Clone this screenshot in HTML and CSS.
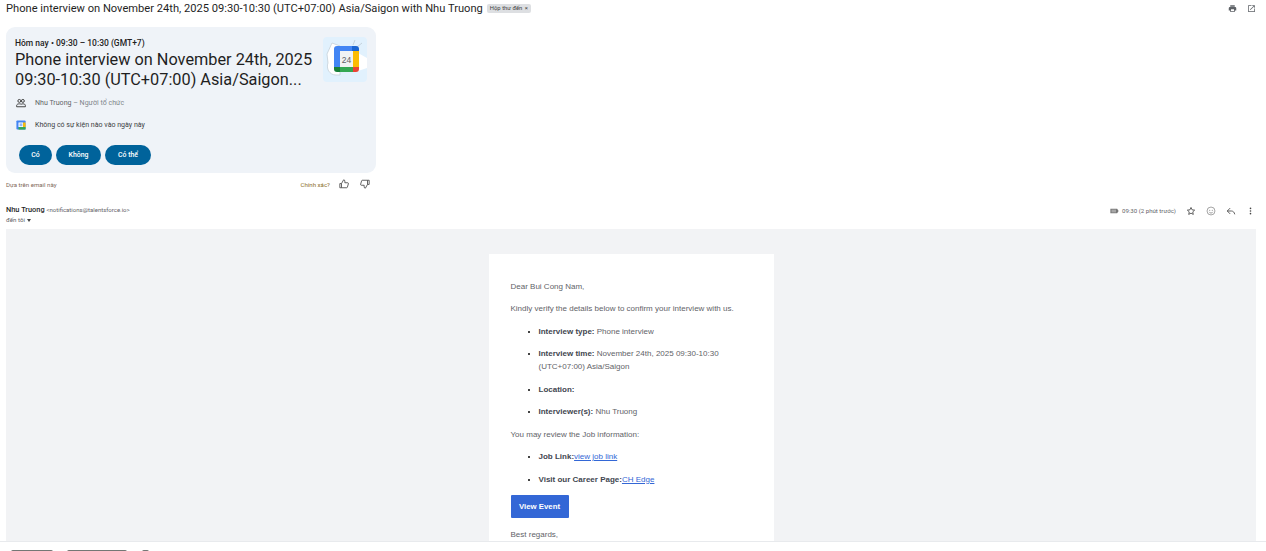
FILE: index.html
```html
<!DOCTYPE html>
<html lang="vi">
<head>
<meta charset="utf-8">
<title>Phone interview</title>
<link rel="stylesheet" href="styles.css">
</head>
<body>
<div class="page">
  <main class="main">
    <header class="subject-row">
      <h1 class="subject">Phone interview on November 24th, 2025 09:30-10:30 (UTC+07:00) Asia/Saigon with Nhu Truong</h1>
      <span class="label">Hộp thư đến <span class="label-x">×</span></span>
      <span class="subject-icons">
        <svg class="ico" viewBox="0 0 24 24"><path d="M19 8H5a3 3 0 0 0-3 3v6h4v4h12v-4h4v-6a3 3 0 0 0-3-3zm-3 11H8v-5h8v5zM18 3H6v4h12V3z"/></svg>
        <svg class="ico" viewBox="0 0 24 24"><path d="M19 19H5V5h7V3H3v18h18v-9h-2v7zM14 3v2h3.6l-9.8 9.8 1.4 1.4L19 6.4V10h2V3h-7z"/></svg>
      </span>
    </header>

    <section class="card">
      <div class="card-top">
        <div class="card-head">
          <div class="when">Hôm nay • 09:30 – 10:30 (GMT+7)</div>
          <div class="title">Phone interview on November 24th, 2025 09:30-10:30 (UTC+07:00) Asia/Saigon...</div>
        </div>
        <div class="art">
          <svg viewBox="0 0 44 45" width="44" height="45">
            <rect width="44" height="45" rx="4" fill="#e1f1fd"/>
            <path d="M4 17L9 6l8 3v29h-4C6 38 3 31 5 26z" fill="#fff" stroke="#bfcad3" stroke-width=".7"/>
            <path d="M35 16l9 5v10l-9 3z" fill="#fff"/>
            <path d="M32 3l-2 5M39 6l-5 4" stroke="#b9c6d0" stroke-width=".7"/>
            <path d="M14 9h15v5H11v-2a3 3 0 0 1 3-3z" fill="#4285f4"/>
            <path d="M29 9h4a3 3 0 0 1 3 3v2h-7z" fill="#1a66d2"/>
            <rect x="11" y="13" width="6" height="17" fill="#4285f4"/>
            <rect x="30" y="14" width="6" height="16" fill="#fbbc04"/>
            <path d="M11 30h6v5h-3a3 3 0 0 1-3-3z" fill="#188038"/>
            <rect x="17" y="30" width="13" height="5" fill="#34a853"/>
            <path d="M30 30h6v2a3 3 0 0 1-3 3h-3z" fill="#ea4335"/>
            <rect x="17" y="14" width="13" height="16" fill="#f1f3f4"/>
            <text x="23.5" y="25.500" class="art-num">24</text>
          </svg>
        </div>
      </div>
      <div class="info-row">
        <svg class="info-ico" viewBox="0 0 24 24"><g fill="none" stroke="#444" stroke-width="2.400"><circle cx="8" cy="7" r="3.500"/><circle cx="16.500" cy="7" r="3.500"/><path d="M1.500 21v-3c0-2.500 3-4 6.500-4 1.800 0 3.200.4 4.300 1 1-.6 2.500-1 4.200-1 3.500 0 6 1.500 6 4v3z"/></g></svg>
        <span class="info-text">Nhu Truong <span class="muted">– Người tổ chức</span></span>
      </div>
      <div class="info-row row-two">
        <svg class="info-ico" viewBox="0 0 24 24">
          <rect x="1" y="1" width="22" height="22" rx="2" fill="#4285f4"/>
          <rect x="6" y="6" width="11" height="11" fill="#fff"/>
          <rect x="17" y="6" width="6" height="11" fill="#fbbc04"/>
          <rect x="6" y="17" width="17" height="6" fill="#34a853"/>
          <rect x="9" y="8" width="2" height="7" fill="#4285f4"/>
          <rect x="13" y="8" width="2" height="7" fill="#4285f4"/>
        </svg>
        <span class="info-text dark">Không có sự kiện nào vào ngày này</span>
      </div>
      <div class="rsvp">
        <button class="pill pill-yes">Có</button>
        <button class="pill pill-no">Không</button>
        <button class="pill pill-maybe">Có thể</button>
      </div>
    </section>

    <div class="feedback">
      <span class="based">Dựa trên email này</span>
      <span class="feedback-right">
        <span class="accurate">Chính xác?</span>
        <svg class="thumb" viewBox="0 0 24 24"><path fill="none" stroke="#444" stroke-width="2" d="M2 11h4v10H2zM6 11l5-9c2 0 3 1 3 3v4h7c1 0 2 1 1.500 2.500L20 20c-.3.700-1 1-1.500 1H6"/></svg>
        <svg class="thumb thumb-down" viewBox="0 0 24 24"><path fill="none" stroke="#444" stroke-width="2" d="M18 13h4V3h-4zM18 13l-5 9c-2 0-3-1-3-3v-4H3c-1 0-2-1-1.500-2.500L4 4c.3-.7 1-1 1.500-1H18"/></svg>
      </span>
    </div>

    <div class="sender-row">
      <div class="sender">
        <div><span class="sender-name">Nhu Truong</span> <span class="sender-mail">&lt;notifications@talentsforce.io&gt;</span></div>
        <div class="to-me">đến tôi <span class="caret"></span></div>
      </div>
      <div class="sender-tools">
        <svg class="tag" viewBox="0 0 24 14"><path fill="#777" d="M1 1h18l4 6-4 6H1z"/><path stroke="#fff" stroke-width="1" d="M4 4.500h12M4 7h12M4 9.500h12"/></svg>
        <span class="time">09:30 (2 phút trước)</span>
        <svg class="tool tool-star" viewBox="0 0 24 24"><path fill="none" stroke="#444" stroke-width="2" d="M12 3.500l2.600 5.700 6.200.7-4.600 4.200 1.300 6.100L12 17.200l-5.500 3 1.300-6.100-4.600-4.200 6.200-.7z"/></svg>
        <svg class="tool tool-smile" viewBox="0 0 24 24"><g fill="none" stroke="#777" stroke-width="1.600"><circle cx="12" cy="12" r="9.500"/><path d="M7.500 14c1 2 2.700 3 4.500 3s3.500-1 4.500-3"/></g><circle cx="9" cy="10" r="1.200" fill="#777"/><circle cx="15" cy="10" r="1.200" fill="#777"/></svg>
        <svg class="tool tool-reply" viewBox="0 0 24 24"><path fill="none" stroke="#444" stroke-width="2" d="M10 5l-7 7 7 7M3 12h10c4 0 7 3 8 8"/></svg>
        <svg class="tool tool-more" viewBox="0 0 24 24"><circle cx="12" cy="5" r="2.200" fill="#444"/><circle cx="12" cy="12" r="2.200" fill="#444"/><circle cx="12" cy="19" r="2.200" fill="#444"/></svg>
      </div>
    </div>

    <section class="mail-bg">
      <article class="mail">
        <p class="line">Dear Bui Cong Nam,</p>
        <p class="line">Kindly verify the details below to confirm your interview with us.</p>
        <ul class="details">
          <li><b>Interview type:</b> Phone interview</li>
          <li><b>Interview time:</b> November 24th, 2025 09:30-10:30 (UTC+07:00) Asia/Saigon</li>
          <li><b>Location:</b></li>
          <li><b>Interviewer(s):</b> Nhu Truong</li>
        </ul>
        <p class="line">You may review the Job information:</p>
        <ul class="details">
          <li><b>Job Link:</b><a href="#">view job link</a></li>
          <li><b>Visit our Career Page:</b><a href="#">CH Edge</a></li>
        </ul>
        <a class="view" href="#">View Event</a>
        <p class="line">Best regards,</p>
      </article>
    </section>
  </main>
  <footer class="reply-bar">
    <span class="chip chip-a"></span>
    <span class="chip chip-b"></span>
    <span class="chip chip-c"></span>
  </footer>
</div>
</body>
</html>
```
FILE: styles.css
```css
* { box-sizing: border-box; }
html, body { margin: 0; padding: 0; height: 551px; overflow: hidden; background: #fff; }
body { font-family: Roboto, "Noto Sans", sans-serif; color: #1f1f1f; }
.page { width: 1266px; height: 551px; display: flex; flex-direction: column; overflow: hidden; }
.main { flex: 0 0 541px; height: 541px; overflow: hidden; display: flex; flex-direction: column; padding: 0 10px 0 6px; }

.subject-row { height: 17px; display: flex; align-items: center; flex: none; }
.subject { margin: 0; font-size: 11.14px; font-weight: 400; line-height: 16px; white-space: nowrap; }
.label { margin-left: 4px; height: 9px; padding: 0 3px; background: #dddfe2; border-radius: 2px; font-size: 5.9px; line-height: 9px; color: #444; white-space: nowrap; }
.label-x { margin-left: 1px; }
.subject-icons { margin-left: auto; margin-right: 0; display: flex; gap: 10px; }
.ico { width: 9px; height: 9px; fill: #5f6368; }

.card { width: 370px; height: 146px; margin-top: 10px; padding: 10px 9px 0 9px; border-radius: 9px; background: #eff3f8; display: flex; flex-direction: column; flex: none; }
.card-top { display: flex; justify-content: space-between; height: 55px; }
.card-head { width: 302px; }
.when { font-size: 8.5px; line-height: 12px; font-weight: 500; color: #1f1f1f; }
.title { margin-top: 1px; font-size: 16.3px; line-height: 20px; color: #1f1f1f; }
.art { width: 44px; height: 45px; margin-top: 0; }
.art-num { font: 400 8.5px "Liberation Sans", sans-serif; fill: #5f6368; text-anchor: middle; }
.info-row { display: flex; align-items: center; height: 12px; margin-top: 5px; }
.row-two { margin-top: 10px; }
.info-ico { width: 10px; height: 10px; margin-right: 9px; margin-left: 1px; flex: none; }
.info-text { font-size: 7.05px; line-height: 12px; color: #5f6368; }
.info-text.dark { color: #3c4043; }
.muted { color: #80868b; }
.rsvp { display: flex; gap: 4px; margin-top: 14px; margin-left: 4px; }
.pill { height: 20px; border: 0; padding: 0; border-radius: 10px; background: #00639b; color: #fff; font: 500 6.9px/20px Roboto, sans-serif; }
.pill-yes { width: 33px; }
.pill-no { width: 45px; }
.pill-maybe { width: 46px; }

.feedback { width: 370px; height: 12px; margin-top: 5px; display: flex; justify-content: space-between; align-items: center; flex: none; }
.based { font-size: 6.1px; color: #80695a; }
.feedback-right { display: flex; align-items: center; margin-right: 6px; }
.accurate { font-size: 6.1px; color: #8a6d1f; margin-right: 9px; }
.thumb { width: 10px; height: 10px; }
.thumb-down { margin-left: 11px; }

.sender-row { height: 24px; margin-top: 15px; display: flex; justify-content: space-between; flex: none; }
.sender { font-size: 7.4px; line-height: 10px; }
.sender-name { font-weight: 500; color: #1f1f1f; }
.sender-mail { font-size: 6px; color: #5f6368; }
.to-me { font-size: 6.2px; color: #5f6368; }
.caret { display: inline-block; margin-left: 1px; vertical-align: middle; border: 2.500px solid transparent; border-top: 3px solid #444; border-bottom: 0; }
.sender-tools { display: flex; align-items: center; height: 11px; margin-top: 0; }
.tag { width: 9px; height: 6px; margin-right: 3px; }
.time { font-size: 6.1px; color: #5f6368; margin-right: 10px; }
.tool { width: 10px; height: 10px; }
.tool-smile { margin-left: 10px; }
.tool-reply { margin-left: 10px; }
.tool-more { margin-left: 10px; width: 9px; margin-right: 1px; }

.mail-bg { flex: 1 0 auto; background: #f2f3f5; padding-top: 25px; display: flex; justify-content: center; overflow: hidden; }
.mail { width: 285px; background: #fff; padding: 25.5px 22px 0; font-family: "Liberation Sans", Arial, sans-serif; font-size: 8px; line-height: 13px; color: #5f6368; align-self: flex-start; min-height: 300px; }
.line { margin: 0 0 9.500px; }
.details { margin: 0 0 9.500px; padding: 0 0 0 28px; list-style: square; }
.details li { margin: 0 0 9.500px; }
.details li::marker { color: #444; font-size: 7px; }
.details b { font-weight: 700; color: #3f4650; }
.details a { color: #3367d6; text-decoration: underline; }
.view { display: block; width: 58px; height: 23px; margin: 4px 0 10px; border-radius: 1px; background: #3367d6; color: #fff; font-weight: 700; font-size: 7.8px; text-align: center; line-height: 23px; text-decoration: none; }

.reply-bar { flex: 0 0 10px; height: 10px; border-top: 1px solid #e8eaed; padding: 8px 0 0 11px; display: flex; gap: 14px; align-items: flex-start; overflow: hidden; }
.chip { display: block; height: 8px; border-top: 1px solid #747775; border-radius: 2px 2px 0 0; }
.chip-a { width: 42px; }
.chip-b { width: 60px; }
.chip-c { width: 7px; margin-left: 1px; }
```
